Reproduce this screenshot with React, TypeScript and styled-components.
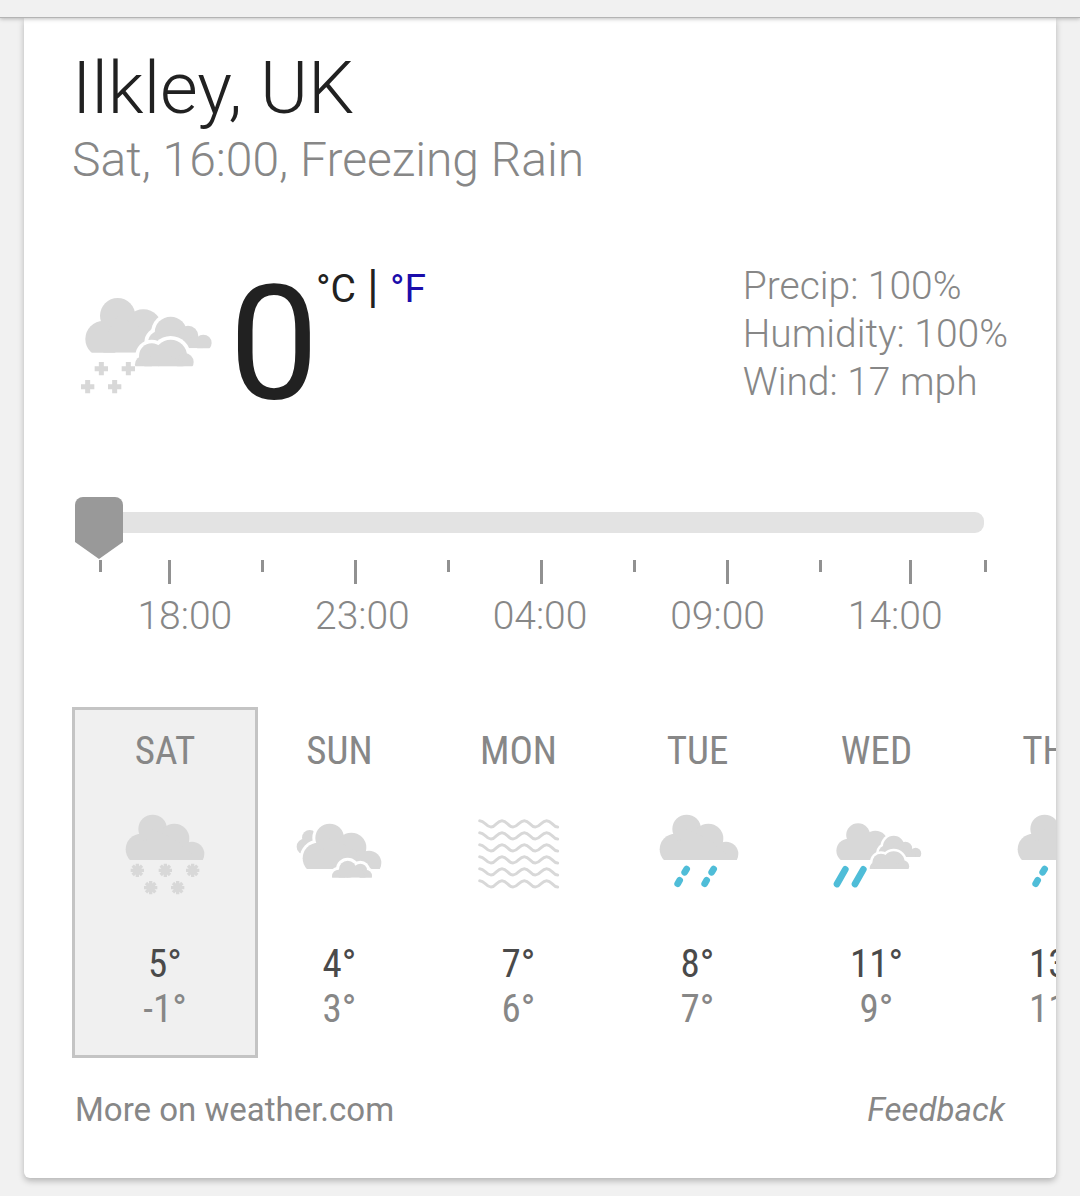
import React, { useId, useState } from "react";
import styled, { createGlobalStyle } from "styled-components";

const GlobalStyle = createGlobalStyle`
  *, *::before, *::after { box-sizing: border-box; }
  body {
    margin: 0;
    background: #f1f1f1;
    font-family: Roboto, "Liberation Sans", sans-serif;
    color: #212121;
    overflow-x: hidden;
  }
`;

const GREY = "#878787";
const CLOUD = "#d8d8d8";
const RAIN = "#4fbdd8";

/* ---------- weather drawings ---------- */

type Circle = [number, number, number];

interface CloudProps {
  circles: Circle[];
  base: number;
  gap?: number;
}

/* A cloud is a union of circles cut flat at its base, with an optional white rim.
   The circles are listed from left to right. */
function Cloud({ circles, base, gap = 0 }: CloudProps) {
  const id = useId();
  const left = circles[0][0];
  const right = circles[circles.length - 1][0];
  const body = [[left, base], ...circles.map(([x, y]) => [x, y]), [right, base]];
  return (
    <g clipPath={`url(#${id})`}>
      <clipPath id={id}>
        <rect x={-1000} y={-1000} width={3000} height={1000 + base} />
      </clipPath>
      {gap > 0 &&
        circles.map(([x, y, r], i) => <circle key={`g${i}`} cx={x} cy={y} r={r + gap} fill="#fff" />)}
      {circles.map(([x, y, r], i) => (
        <circle key={i} cx={x} cy={y} r={r} fill={CLOUD} />
      ))}
      <polygon points={body.map((p) => p.join(",")).join(" ")} fill={CLOUD} />
    </g>
  );
}

const SINGLE: Circle[] = [[47, 104, 47], [81, 43, 43], [146, 72, 45], [199, 118, 37]];

function SingleCloud({ x, y, gap = 0 }: { x: number; y: number; gap?: number }) {
  return (
    <g transform={`translate(${x} ${y})`}>
      <Cloud circles={SINGLE} base={136} gap={gap} />
    </g>
  );
}

function TripleCloud() {
  return (
    <>
      <Cloud circles={[[130, 237, 54], [173, 167, 53], [250, 205, 57]]} base={278} />
      <Cloud circles={[[300, 248, 36], [332, 218, 48], [384, 228, 31], [430, 249, 25]]} base={265} gap={11} />
      <Cloud circles={[[251, 313, 26], [275, 288, 38], [332, 288, 49], [374, 306, 27]]} base={319} gap={11} />
    </>
  );
}

function SleetIcon() {
  const marks = [[124, 326], [205, 326], [83, 380], [164, 380]];
  return (
    <svg width="135" height="100" viewBox="57 105 405 300" aria-hidden="true">
      <TripleCloud />
      {marks.map(([x, y]) => (
        <path key={`${x}-${y}`} d={`M${x - 20} ${y}h40M${x} ${y - 20}v40`} stroke={CLOUD} strokeWidth="15" />
      ))}
    </svg>
  );
}

function SnowIcon() {
  const flakes = [[52, 175], [136, 175], [218, 175], [92, 227], [173, 227]];
  return (
    <svg width="90" height="84" viewBox="0 0 270 252" aria-hidden="true">
      <SingleCloud x={17} y={8} />
      {flakes.map(([x, y]) => (
        <path
          key={`${x}-${y}`}
          d={`M${x - 20} ${y}h40M${x} ${y - 20}v40M${x - 14} ${y - 14}l28 28M${x - 14} ${y + 14}l28-28`}
          stroke={CLOUD}
          strokeWidth="10"
        />
      ))}
    </svg>
  );
}

function CloudyIcon() {
  return (
    <svg width="90" height="84" viewBox="706 336 270 252" aria-hidden="true">
      <Cloud circles={[[735, 440, 24], [750, 413, 23]]} base={463} />
      <SingleCloud x={729} y={371} gap={9} />
      <Cloud circles={[[837, 529, 20], [864, 508, 26], [902, 511, 20], [918, 528, 19]]} base={533} gap={9} />
    </svg>
  );
}

function FogIcon() {
  const rows = [92, 128, 164, 200, 236, 272];
  return (
    <svg width="90" height="84" viewBox="43 66 270 252" aria-hidden="true">
      {rows.map((y) => (
        <path
          key={y}
          d={`M60 ${y}C76 ${y} 78 ${y + 19} 94 ${y + 19}S111 ${y} 127 ${y}S144 ${y + 19} 160 ${y + 19}S178 ${y} 194 ${y}S211 ${y + 19} 227 ${y + 19}S245 ${y} 261 ${y}S278 ${y + 19} 294 ${y + 19}`}
          fill="none"
          stroke={CLOUD}
          strokeWidth="9"
          strokeLinecap="round"
        />
      ))}
    </svg>
  );
}

function ShowerIcon() {
  return (
    <svg width="90" height="84" viewBox="580 66 270 252" aria-hidden="true">
      <SingleCloud x={600} y={74} />
      <path
        d="M681 237L675 247M660 271L654 281M762 237L756 247M741 271L735 281"
        stroke={RAIN}
        strokeWidth="20"
        strokeLinecap="round"
      />
    </svg>
  );
}

function RainIcon() {
  return (
    <svg width="90" height="84" viewBox="67 66 270 252" aria-hidden="true">
      <g transform="translate(29 23) scale(.672)">
        <TripleCloud />
      </g>
      <path d="M107 238L82 282M161 238L136 282" stroke={RAIN} strokeWidth="20" strokeLinecap="round" />
    </svg>
  );
}

/* ---------- layout ---------- */

const TopBar = styled.header`
  position: relative;
  z-index: 1;
  height: 18px;
  background: #f1f1f1;
  border-bottom: 1px solid #b4b4b4;
  box-shadow: 0 1px 4px rgba(0, 0, 0, 0.25);
`;

const Card = styled.main`
  margin: 0 24px 18px;
  padding: 29px 48px 48px;
  background: #fff;
  border-radius: 0 0 6px 6px;
  box-shadow: 0 3px 6px rgba(0, 0, 0, 0.25);
`;

const Place = styled.h1`
  margin: 0;
  font-size: 73px;
  line-height: 83px;
  font-weight: 300;
`;

const Summary = styled.p`
  margin: 0;
  font-size: 48px;
  line-height: 60px;
  font-weight: 300;
  color: ${GREY};
`;

const Current = styled.section`
  display: flex;
  justify-content: space-between;
  align-items: flex-start;
  margin-top: 72px;
`;

const Reading = styled.div`
  display: flex;
  align-items: flex-start;
`;

const CurrentIcon = styled.div`
  display: flex;
  padding: 33px 15px 0 7px;
`;

const Degrees = styled.span`
  font-size: 160px;
  line-height: 164px;
`;

const Units = styled.div`
  margin-left: -3px;
  font-size: 39px;
  line-height: 54px;
  white-space: pre;
`;

const Divider = styled.span`
  font-size: 46px;
  line-height: 1;
`;

const UnitLink = styled.a`
  color: #1a0dab;
  text-decoration: none;
`;

const Details = styled.ul`
  list-style: none;
  margin: 0;
  padding: 0;
  font-size: 39px;
  line-height: 48px;
  font-weight: 300;
  color: ${GREY};
`;

const Timeline = styled.section`
  margin: 71px 24px 0 3px;
`;

const Slider = styled.input`
  appearance: none;
  display: block;
  width: 100%;
  height: 51px;
  margin: 0;
  background: transparent;
  cursor: pointer;

  &::-webkit-slider-runnable-track {
    height: 21px;
    border-radius: 9px;
    background: #e3e3e3;
  }

  &::-webkit-slider-thumb {
    appearance: none;
    width: 48px;
    height: 62px;
    margin-top: -15px;
    border-radius: 8px 8px 0 0;
    background: #999;
    clip-path: polygon(0 0, 100% 0, 100% 45px, 50% 100%, 0 45px);
  }
`;

const Ticks = styled.div`
  display: grid;
  grid-template-columns: 69fr repeat(7, 93fr) 90fr 75fr 3px;
  margin: 12px -3px 0 24px;
`;

const Tick = styled.span<{ $long: boolean }>`
  width: 3px;
  height: ${(p) => (p.$long ? 24 : 12)}px;
  background: #919191;
`;

const Hours = styled.div`
  display: grid;
  grid-template-columns: repeat(5, 1fr);
  margin: 8px 0 0 21px;
  font-size: 39px;
  line-height: 48px;
  font-weight: 300;
  text-align: center;
  color: ${GREY};
`;

const Forecast = styled.section`
  display: flex;
  margin: 67px -48px 0 0;
  overflow: hidden;
`;

const Day = styled.button<{ $selected: boolean }>`
  flex: 0 0 ${(p) => (p.$selected ? 186 : 179)}px;
  display: flex;
  flex-direction: column;
  align-items: center;
  margin: 0 ${(p) => (p.$selected ? -8 : 0)}px 0 0;
  padding: 17px 0 23px;
  border: 3px solid ${(p) => (p.$selected ? "#c4c4c4" : "transparent")};
  background: ${(p) => (p.$selected ? "#f0f0f0" : "transparent")};
  font-family: "Roboto Condensed", Roboto, sans-serif;
  font-size: 39px;
  line-height: 45px;
  color: ${GREY};
  cursor: pointer;

  svg {
    margin: 37px 0 46px;
  }
`;

const DayName = styled.span`
  line-height: 48px;
`;

const High = styled.span`
  color: #4a4a4a;
`;

const Footer = styled.footer`
  display: flex;
  justify-content: space-between;
  margin: 32px 3px 0;
  font-size: 33px;
  line-height: 40px;
`;

const FooterLink = styled.a<{ $italic?: boolean }>`
  color: ${GREY};
  font-style: ${(p) => (p.$italic ? "italic" : "normal")};
  text-decoration: none;
`;

const days = [
  { name: "SAT", Icon: SnowIcon, high: 5, low: -1 },
  { name: "SUN", Icon: CloudyIcon, high: 4, low: 3 },
  { name: "MON", Icon: FogIcon, high: 7, low: 6 },
  { name: "TUE", Icon: ShowerIcon, high: 8, low: 7 },
  { name: "WED", Icon: RainIcon, high: 11, low: 9 },
  { name: "THU", Icon: ShowerIcon, high: 13, low: 11 },
];

const hours = ["18:00", "23:00", "04:00", "09:00", "14:00"];

export default function App() {
  const [selected, setSelected] = useState(0);
  const [hour, setHour] = useState(0);

  return (
    <>
      <GlobalStyle />
      <TopBar />
      <Card>
        <Place>Ilkley, UK</Place>
        <Summary>Sat, 16:00, Freezing Rain</Summary>

        <Current>
          <Reading>
            <CurrentIcon>
              <SleetIcon />
            </CurrentIcon>
            <Degrees>0</Degrees>
            <Units>
              °C<Divider> | </Divider>
              <UnitLink href="#fahrenheit">°F</UnitLink>
            </Units>
          </Reading>
          <Details>
            <li>Precip: 100%</li>
            <li>Humidity: 100%</li>
            <li>Wind: 17 mph</li>
          </Details>
        </Current>

        <Timeline>
          <Slider
            type="range"
            min={0}
            max={24}
            value={hour}
            onChange={(e) => setHour(Number(e.target.value))}
            aria-label="Forecast hour"
          />
          <Ticks>
            {Array.from({ length: 11 }, (_, i) => (
              <Tick key={i} $long={i % 2 === 1} />
            ))}
          </Ticks>
          <Hours>
            {hours.map((h) => (
              <span key={h}>{h}</span>
            ))}
          </Hours>
        </Timeline>

        <Forecast>
          {days.map(({ name, Icon, high, low }, i) => (
            <Day key={name} type="button" $selected={i === selected} onClick={() => setSelected(i)}>
              <DayName>{name}</DayName>
              <Icon />
              <High>{high}°</High>
              <span>{low}°</span>
            </Day>
          ))}
        </Forecast>

        <Footer>
          <FooterLink href="#weather">More on weather.com</FooterLink>
          <FooterLink href="#feedback" $italic>
            Feedback
          </FooterLink>
        </Footer>
      </Card>
    </>
  );
}
